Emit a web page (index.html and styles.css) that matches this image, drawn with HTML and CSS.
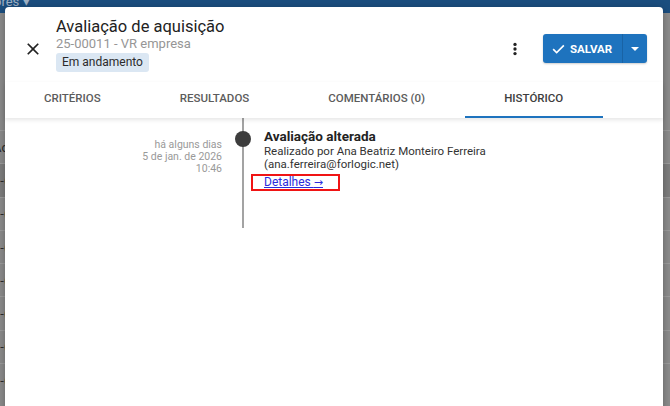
FILE: index.html
```html
<!DOCTYPE html>
<html lang="pt-BR">
<head>
    <meta charset="UTF-8">
    <meta name="viewport" content="width=device-width, initial-scale=1.0">
    <title>Avaliação de aquisição</title>
    <link rel="stylesheet" href="styles.css">
</head>
<body>
    <!-- Page behind the dialog (dimmed) -->
    <div class="app">
        <div class="topbar"><span class="topbar-filter">Fornecedores &#9662;</span></div>
        <div class="table">
            <div class="table-head"></div>
            <div class="table-row"><span class="cell">Ac</span></div>
            <div class="table-row selected"><span class="cell">1-(</span></div>
            <div class="table-row"><span class="cell">1-(</span></div>
            <div class="table-row"><span class="cell">1-(</span></div>
            <div class="table-row"><span class="cell">1-(</span></div>
            <div class="table-row"><span class="cell">1-(</span></div>
            <div class="table-row"><span class="cell">1-(</span></div>
            <div class="table-row"><span class="cell">1-(</span></div>
        </div>
    </div>

    <!-- Dialog -->
    <div class="dialog">
        <div class="dialog-header">
            <button class="icon-btn close-btn" title="Fechar">
                <svg width="20" height="20" viewBox="0 0 24 24"><path d="M19 6.41L17.59 5 12 10.59 6.41 5 5 6.41 10.59 12 5 17.59 6.41 19 12 13.41 17.59 19 19 17.59 13.41 12z"/></svg>
            </button>
            <div class="title-block">
                <h1 class="title">Avaliação de aquisição</h1>
                <div class="subtitle">25-00011 - VR empresa</div>
                <span class="chip">Em andamento</span>
            </div>
            <div class="actions">
                <button class="icon-btn more-btn" title="Mais">
                    <svg width="20" height="20" viewBox="0 0 24 24"><circle cx="12" cy="6.5" r="2"/><circle cx="12" cy="12" r="2"/><circle cx="12" cy="17.5" r="2"/></svg>
                </button>
                <div class="split-btn">
                    <button class="save-btn">
                        <svg width="15" height="15" viewBox="0 0 24 24"><path d="M9 16.6L4.4 12l-1.9 1.9L9 20.4 21.5 7.9 19.6 6z"/></svg>
                        SALVAR
                    </button>
                    <button class="caret-btn"><span class="caret"></span></button>
                </div>
            </div>
        </div>

        <nav class="tabs">
            <div class="tab">CRITÉRIOS</div>
            <div class="tab">RESULTADOS</div>
            <div class="tab">COMENTÁRIOS (0)</div>
            <div class="tab active">HISTÓRICO</div>
        </nav>

        <div class="history">
            <div class="event">
                <div class="event-date">
                    <div>há alguns dias</div>
                    <div>5 de jan. de 2026</div>
                    <div>10:46</div>
                </div>
                <div class="event-marker"><span class="dot"></span></div>
                <div class="event-body">
                    <div class="event-title">Avaliação alterada</div>
                    <div class="event-text">Realizado por Ana Beatriz Monteiro Ferreira</div>
                    <div class="event-text">(ana.ferreira@forlogic.net)</div>
                    <span class="highlight"><a href="#" class="details-link">Detalhes <span class="arrow">&rarr;</span></a></span>
                </div>
            </div>
        </div>
    </div>
</body>
</html>
```

FILE: styles.css
```css
* {
    margin: 0;
    padding: 0;
    box-sizing: border-box;
}

body {
    font-family: Roboto, "Liberation Sans", Arial, sans-serif;
    background-color: #8c8c8c;
    width: 670px;
    height: 406px;
    overflow: hidden;
    position: relative;
    color: #212121;
}

button {
    font-family: inherit;
    border: none;
    background: none;
    cursor: pointer;
}

/* Background page */
.topbar {
    height: 13px;
    background-color: #1b4e7f;
    overflow: hidden;
}

.topbar-filter {
    display: block;
    margin-left: -60px;
    margin-top: -6px;
    font-size: 13px;
    color: #9fb1c4;
}

.table-head {
    height: 117px;
}

.table-row {
    height: 33.3px;
    border-top: 1px solid #9c9c9c;
    display: flex;
    align-items: center;
    overflow: hidden;
}

.table-row.selected {
    background-color: #7e7e7e;
}

.cell {
    margin-left: -7px;
    font-size: 13px;
    color: #2a2a2a;
}

/* Dialog */
.dialog {
    position: absolute;
    left: 5px;
    top: 7px;
    right: 7px;
    bottom: -20px;
    background-color: #fff;
    border-radius: 4px;
    box-shadow: 0 2px 8px rgba(0, 0, 0, 0.3);
}

.dialog-header {
    display: flex;
    align-items: center;
    height: 75px;
    padding: 10px 16px 10px 18px;
}

.icon-btn {
    display: flex;
    align-items: center;
    justify-content: center;
    width: 20px;
    height: 20px;
    fill: #222;
}

.close-btn {
    margin-top: 9px;
    margin-right: 13px;
}

.title-block {
    flex: 1;
}

.title {
    font-size: 16.5px;
    font-weight: 400;
    line-height: 20px;
    color: #222;
}

.subtitle {
    font-size: 13px;
    line-height: 14px;
    color: #969696;
}

.chip {
    display: inline-block;
    margin-top: 2px;
    height: 19px;
    line-height: 19px;
    padding: 0 6px;
    font-size: 12px;
    color: #2b2b2b;
    background-color: #dbe7f3;
    border-radius: 3px;
}

.actions {
    display: flex;
    align-items: center;
    margin-top: 8px;
}

.more-btn {
    margin-right: 18px;
}

.split-btn {
    display: flex;
    height: 29px;
    border-radius: 3px;
    overflow: hidden;
    background-color: #1e73be;
    box-shadow: 0 1px 2px rgba(0, 0, 0, 0.2);
}

.save-btn {
    display: flex;
    align-items: center;
    gap: 4px;
    width: 79px;
    padding-left: 8px;
    font-size: 11.5px;
    font-weight: 700;
    color: #fff;
    fill: #fff;
}

.caret-btn {
    width: 25px;
    border-left: 1px solid #1963a5;
    display: flex;
    align-items: center;
    justify-content: center;
}

.caret {
    width: 0;
    height: 0;
    border-left: 4px solid transparent;
    border-right: 4px solid transparent;
    border-top: 4px solid #fff;
}

/* Tabs */
.tabs {
    display: flex;
    height: 36px;
    position: relative;
    z-index: 1;
    box-shadow: 0 2px 4px rgba(0, 0, 0, 0.1);
}

.tab {
    padding: 9px 40px 0 39px;
    font-size: 11.5px;
    font-weight: 500;
    line-height: 14px;
    color: #5c5c5c;
    border-bottom: 2px solid transparent;
}

.tab.active {
    color: #3d3d3d;
    border-bottom-color: #1e73be;
}

/* History timeline */
.event {
    display: flex;
}

.event-date {
    width: 217px;
    padding-top: 21px;
    text-align: right;
    font-size: 10.5px;
    line-height: 12px;
    color: #999;
}

.event-marker {
    width: 42px;
    position: relative;
    display: flex;
    justify-content: center;
}

.event-marker::before {
    content: "";
    width: 2px;
    background-color: #a3a3a3;
}

.dot {
    position: absolute;
    top: 13px;
    left: 13px;
    width: 16px;
    height: 16px;
    border-radius: 50%;
    background-color: #3d3d3d;
}

.event-body {
    padding: 10px 0 37px;
}

.event-title {
    font-size: 13.5px;
    font-weight: 700;
    line-height: 17px;
    color: #222;
}

.event-text {
    font-size: 11.5px;
    line-height: 13px;
    color: #333;
}

.highlight {
    display: inline-block;
    margin-top: 2px;
    margin-left: -13px;
    padding: 0 15px 0 11px;
    border: 2px solid #f01414;
    font-size: 12px;
    line-height: 13px;
}

.details-link {
    color: #2b2bdc;
}

.arrow {
    font-family: "DejaVu Sans", sans-serif;
    font-size: 11px;
}
```
